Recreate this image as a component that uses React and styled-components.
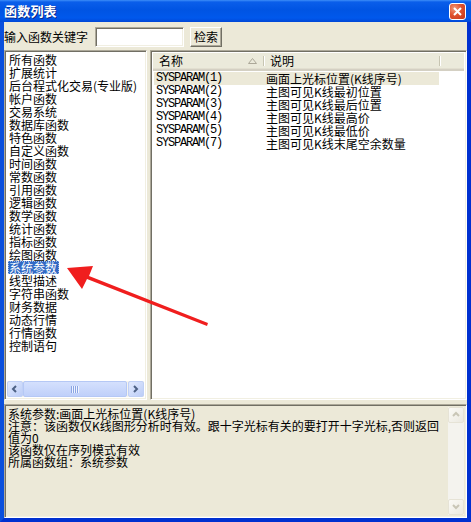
import React from 'react'
import styled, { createGlobalStyle } from 'styled-components'

const FONT = `"Noto Sans CJK SC", "Liberation Sans", sans-serif`

const GlobalStyle = createGlobalStyle`
  html, body {
    margin: 0;
    padding: 0;
    overflow: hidden;
    background: #ffffff;
  }
  * { box-sizing: border-box; }
`

const Window = styled.div`
  position: relative;
  width: 471px;
  height: 522px;
  display: flex;
  flex-direction: column;
  font-family: ${FONT};
  font-size: 12px;
  color: #000;
`

const TitleBar = styled.div`
  height: 22px;
  flex: none;
  display: flex;
  align-items: center;
  justify-content: space-between;
  padding: 0 5px 0 4px;
  background: linear-gradient(to bottom, #3d8ef8 0px, #0a5eea 2px, #0054e3 10px, #0058ec 18px, #0047d6 22px);
`

const Title = styled.div`
  color: #fff;
  font-weight: bold;
  font-size: 13px;
  line-height: 14px;
  letter-spacing: 0.2px;
  text-shadow: 1px 1px 0 #0a2a8a;
`

const CloseButton = styled.div`
  width: 17px;
  height: 17px;
  margin-top: 1px;
  border: 1px solid #fff;
  border-radius: 3px;
  background: radial-gradient(circle at 30% 30%, #f09a7a 0%, #e0522e 45%, #c3361a 100%);
  display: flex;
  align-items: center;
  justify-content: center;
`

const Frame = styled.div`
  flex: 1;
  display: flex;
  flex-direction: column;
  background: #ece9d8;
  border-left: 4px solid #0a4fdd;
  border-right: 4px solid #0030d0;
  border-bottom: 4px solid #0030d0;
  box-shadow: inset 0 -1px 0 #0a3ac8;
`

const SearchRow = styled.div`
  height: 28px;
  flex: none;
  display: flex;
  align-items: center;
  padding-top: 1px;
`

const Label = styled.span`
  line-height: 14px;
`

const Sunken = styled.div`
  border: 1px solid;
  border-color: #aca899 #ffffff #ffffff #aca899;
  box-shadow: inset 1px 1px 0 #716f64, inset -1px -1px 0 #f1efe2;
`

const SearchInput = styled(Sunken)`
  width: 89px;
  height: 20px;
  margin-left: 7px;
  background: #fff;
`

const Button = styled.div`
  width: 32px;
  height: 20px;
  margin-left: 6px;
  display: flex;
  align-items: center;
  justify-content: center;
  background: #ece9d8;
  border: 1px solid;
  border-color: #ffffff #716f64 #716f64 #ffffff;
  box-shadow: inset -1px -1px 0 #aca899;
  line-height: 14px;
`

const Panes = styled.div`
  height: 350px;
  flex: none;
  display: flex;
  gap: 3px;
`

const CategoryBox = styled(Sunken)`
  width: 143px;
  display: flex;
  flex-direction: column;
  background: #fff;
  padding: 2px;
`

const Items = styled.div`
  flex: 1;
  padding: 0 0 0 1px;
`

const Item = styled.div`
  width: fit-content;
  height: 13px;
  line-height: 13px;
  padding: 0 2px 0 1px;
  white-space: nowrap;
  color: ${p => (p.$selected ? '#fff' : '#000')};
  background: ${p => (p.$selected ? '#316ac5' : 'transparent')};
  outline: ${p => (p.$selected ? '1px dotted #9fb9e8' : 'none')};
  outline-offset: -1px;
`

const HScroll = styled.div`
  height: 16px;
  flex: none;
  display: flex;
  background: #f4f3ee;
`

const ScrollBtn = styled.div`
  width: 16px;
  height: 16px;
  flex: none;
  display: flex;
  align-items: center;
  justify-content: center;
  border: 1px solid ${p => (p.$disabled ? '#e6e3d6' : '#c0d0f6')};
  border-radius: 2px;
  background: ${p =>
    p.$disabled
      ? 'linear-gradient(135deg, #fbfaf6, #ebe9e0)'
      : 'linear-gradient(135deg, #e2eafe, #bccdf7)'};
`

const Thumb = styled.div`
  width: 104px;
  height: 16px;
  flex: none;
  display: flex;
  align-items: center;
  justify-content: center;
  border: 1px solid #b5c8f5;
  border-radius: 2px;
  background: linear-gradient(to bottom, #d4e0fd, #bfd0fa);
`

const Grip = styled.span`
  width: 8px;
  height: 7px;
  background: repeating-linear-gradient(to right, #8ba5e3 0 1px, #eef3ff 1px 2px);
`

const TrackGap = styled.div`
  flex: 1;
`

const FuncBox = styled(Sunken)`
  flex: 1;
  display: flex;
  flex-direction: column;
  background: #fff;
  padding: 2px;
`

const Header = styled.div`
  height: 18px;
  flex: none;
  display: flex;
  background: #ebeadb;
  border-bottom: 2px solid #d4d0c3;
  box-shadow: inset 0 -1px 0 #e2dfd0;
`

const HeadCell = styled.div`
  width: ${p => p.$w}px;
  flex: none;
  display: flex;
  align-items: center;
  padding-left: 6px;
  line-height: 14px;
  position: relative;
  &::after {
    content: '';
    position: absolute;
    right: 0;
    top: 3px;
    bottom: 3px;
    width: 1px;
    background: #c7c5b2;
    box-shadow: 1px 0 0 #fff;
  }
`

const SortMark = styled.svg`
  margin-left: auto;
  margin-right: 7px;
`

const Rows = styled.div`
  padding: 1px 0 0 1px;
`

const Row = styled.div`
  width: 285px;
  height: 13px;
  display: flex;
  align-items: center;
  background: ${p => (p.$active ? '#ece9d8' : 'transparent')};
`

const NameCell = styled.span`
  width: 110px;
  padding-left: 2px;
  font-family: "Liberation Mono", monospace;
  font-size: 12px;
  letter-spacing: -1.2px;
  line-height: 13px;
`

const DescCell = styled.span`
  padding-left: 2px;
  line-height: 13px;
  white-space: nowrap;
`

const Detail = styled(Sunken)`
  flex: 1;
  margin-top: 4px;
  display: flex;
  background: #ece9d8;
  padding: 2px;
`

const DetailText = styled.div`
  flex: 1;
  padding: 1px 0 0 1px;
`

const Line = styled.div`
  height: 12px;
  line-height: 12px;
  white-space: nowrap;
`

const VScroll = styled.div`
  width: 16px;
  flex: none;
  display: flex;
  flex-direction: column;
  justify-content: space-between;
  background: #f4f3ee;
`

const Arrow = styled.svg`
  position: absolute;
  left: 0;
  top: 0;
  pointer-events: none;
`

const Chevron = ({ dir, color }) => {
  const pts = {
    left: '6,2 3,5 6,8',
    right: '3,2 6,5 3,8',
    up: '2,6 5,3 8,6',
    down: '2,3 5,6 8,3',
  }[dir]
  return (
    <svg width="10" height="10" viewBox="0 0 10 10">
      <polyline points={pts} fill="none" stroke={color} strokeWidth="2" />
    </svg>
  )
}

const categories = [
  '所有函数', '扩展统计', '后台程式化交易(专业版)', '帐户函数', '交易系统',
  '数据库函数', '特色函数', '自定义函数', '时间函数', '常数函数', '引用函数',
  '逻辑函数', '数学函数', '统计函数', '指标函数', '绘图函数', '系统参数',
  '线型描述', '字符串函数', '财务数据', '动态行情', '行情函数', '控制语句',
]

const funcs = [
  ['SYSPARAM(1)', '画面上光标位置(K线序号)'],
  ['SYSPARAM(2)', '主图可见K线最初位置'],
  ['SYSPARAM(3)', '主图可见K线最后位置'],
  ['SYSPARAM(4)', '主图可见K线最高价'],
  ['SYSPARAM(5)', '主图可见K线最低价'],
  ['SYSPARAM(7)', '主图可见K线末尾空余数量'],
]

const detail = [
  '系统参数:画面上光标位置(K线序号)',
  '注意：该函数仅K线图形分析时有效。跟十字光标有关的要打开十字光标,否则返回',
  '值为0',
  '该函数仅在序列模式有效',
  '所属函数组：系统参数',
]

export default function App() {
  return (
    <Window>
      <GlobalStyle />
      <TitleBar>
        <Title>函数列表</Title>
        <CloseButton>
          <svg width="9" height="9" viewBox="0 0 9 9">
            <path d="M1 1 L8 8 M8 1 L1 8" stroke="#fff" strokeWidth="2" />
          </svg>
        </CloseButton>
      </TitleBar>
      <Frame>
        <SearchRow>
          <Label>输入函数关键字</Label>
          <SearchInput />
          <Button>检索</Button>
        </SearchRow>
        <Panes>
          <CategoryBox>
            <Items>
              {categories.map(c => (
                <Item key={c} $selected={c === '系统参数'}>{c}</Item>
              ))}
            </Items>
            <HScroll>
              <ScrollBtn><Chevron dir="left" color="#4d6185" /></ScrollBtn>
              <Thumb><Grip /></Thumb>
              <TrackGap />
              <ScrollBtn><Chevron dir="right" color="#4d6185" /></ScrollBtn>
            </HScroll>
          </CategoryBox>
          <FuncBox>
            <Header>
              <HeadCell $w={111}>
                名称
                <SortMark width="9" height="6" viewBox="0 0 9 6">
                  <polygon points="4.5,0.5 8.5,5.5 0.5,5.5" fill="none" stroke="#aca899" strokeWidth="1" />
                </SortMark>
              </HeadCell>
              <HeadCell $w={176}>说明</HeadCell>
            </Header>
            <Rows>
              {funcs.map(([name, desc], i) => (
                <Row key={name} $active={i === 0}>
                  <NameCell>{name}</NameCell>
                  <DescCell>{desc}</DescCell>
                </Row>
              ))}
            </Rows>
          </FuncBox>
        </Panes>
        <Detail>
          <DetailText>
            {detail.map((l, i) => <Line key={i}>{l}</Line>)}
          </DetailText>
          <VScroll>
            <ScrollBtn $disabled><Chevron dir="up" color="#c9c6b6" /></ScrollBtn>
            <ScrollBtn $disabled><Chevron dir="down" color="#c9c6b6" /></ScrollBtn>
          </VScroll>
        </Detail>
      </Frame>
      <Arrow width="471" height="522" viewBox="0 0 471 522">
        <polygon points="67,268 93,266 89,276 208,323 207,326 87,279 82,289" fill="#f01e1e" />
      </Arrow>
    </Window>
  )
}
